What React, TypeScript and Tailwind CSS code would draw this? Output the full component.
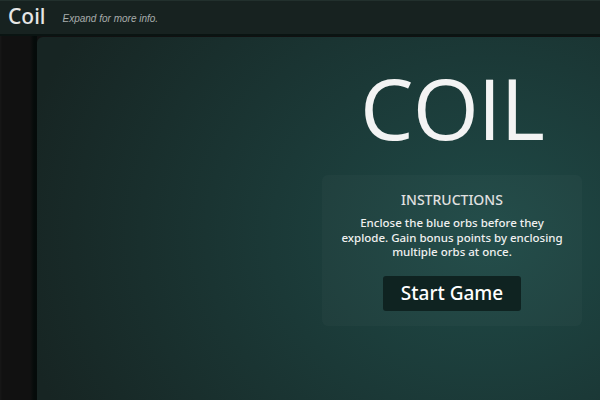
export default function App() {
  return (
    <div className="w-[600px] h-[400px] overflow-hidden flex flex-col bg-[#111111]" style={{ fontFamily: '"Open Sans", "Noto Sans", sans-serif' }}>
      <header className="h-[36px] shrink-0 bg-[#172220] border-t border-t-[#22302d] border-b-2 border-b-[#0a1412] flex items-center px-[8px] gap-[17px]">
        <span className="text-[21px] font-medium leading-none text-[#e6e6e6] -mt-[3px]" style={{ fontFamily: '"Noto Sans", sans-serif' }}>Coil</span>
        <span className="text-[10px] italic text-[#a8adac] mt-[2px]" style={{ fontFamily: '"Liberation Sans", Arial, sans-serif' }}>Expand for more info.</span>
      </header>
      <div className="flex flex-1 min-h-0">
        <div className="w-[37px] shrink-0 bg-[linear-gradient(to_right,#181818_0px,#111111_2px,#111111_30px,#050b0a_34px)]" />
        <main className="flex-1 rounded-tl-[6px] mt-[1px] bg-[radial-gradient(ellipse_85%_110%_at_80%_55%,#1f4a47_0%,#1b3937_45%,#172523_100%)] flex flex-col items-end pr-[18px]">
          <div className="w-[260px] flex flex-col items-center">
            <h1 className="text-[85px] leading-none text-[#f3f3f3] mt-[28px] tracking-[-1px]">COIL</h1>
            <div className="mt-[25px] w-[260px] h-[151px] rounded-[6px] bg-[#ffffff]/[0.025] flex flex-col items-center pt-[18px]" style={{ fontFamily: '"Noto Sans", "Open Sans", sans-serif' }}>
              <div className="text-[14px] font-medium text-[#e0e0e0] leading-none">INSTRUCTIONS</div>
              <p className="mt-[9px] w-[222px] text-[11.5px] font-medium leading-[14.5px] text-[#f0f0f0] text-center">Enclose the blue orbs before they explode. Gain bonus points by enclosing multiple orbs at once.</p>
              <button className="mt-[16px] w-[138px] h-[35px] rounded-[3px] bg-[#0f2321] text-white text-[19px] font-medium leading-none">Start Game</button>
            </div>
          </div>
        </main>
      </div>
    </div>
  );
}
